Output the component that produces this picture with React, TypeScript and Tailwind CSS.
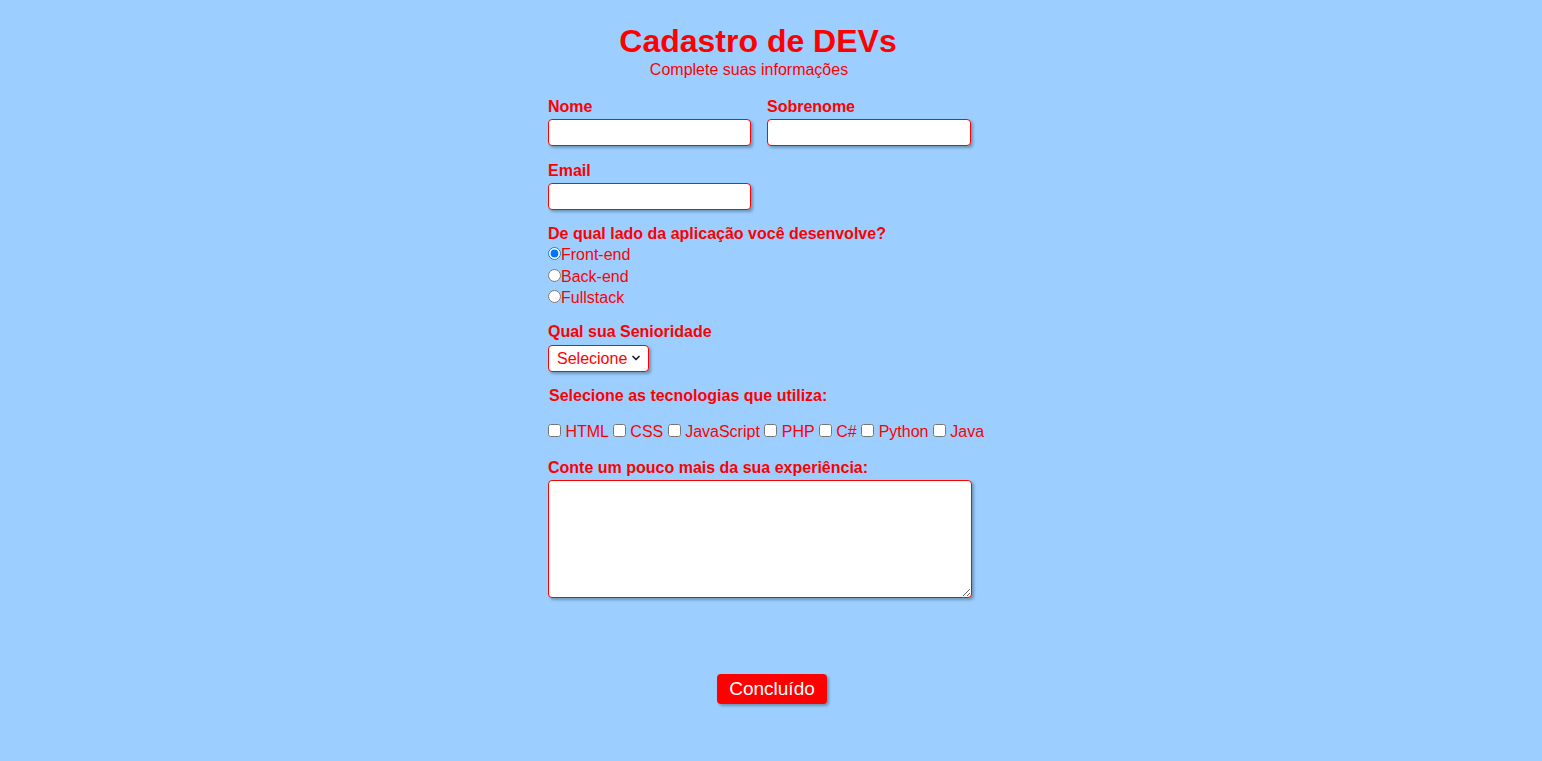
import { ChevronDown } from "lucide-react";

const fieldCls =
  "block h-[27px] rounded-[4px] border border-[#ff0000] bg-white shadow-[2px_2px_3px_rgba(0,0,0,0.28)] outline-none";
const labelCls = "block font-bold text-[#ff0000]";

const lados = ["Front-end", "Back-end", "Fullstack"];
const techs = ["HTML", "CSS", "JavaScript", "PHP", "C#", "Python", "Java"];

export default function App() {
  return (
    <div
      className="min-h-screen bg-[#9ccfff] text-[16px] leading-[normal] text-[#ff0000]"
      style={{ fontFamily: '"Liberation Sans", Arial, sans-serif' }}
    >
      <form className="mx-auto w-[446px] pt-[23px] pb-[58px]" onSubmit={(e) => e.preventDefault()}>
        {/* CABEÇALHO */}
        <h1 className="w-[420px] text-center text-[32px] font-bold">Cadastro de DEVs</h1>
        <p className="mt-[1px] w-[402px] text-center">Complete suas informações</p>

        {/* NOME / SOBRENOME */}
        <div className="mt-[19px] flex gap-[16px]">
          <div>
            <label className={labelCls}>Nome</label>
            <input type="text" className={`${fieldCls} mt-[3px] w-[203px]`} />
          </div>
          <div>
            <label className={labelCls}>Sobrenome</label>
            <input type="text" className={`${fieldCls} mt-[3px] w-[204px]`} />
          </div>
        </div>

        <div className="mt-[16px]">
          <label className={labelCls}>Email</label>
          <input type="email" className={`${fieldCls} mt-[3px] w-[203px]`} />
        </div>

        {/* LADO DA APLICAÇÃO */}
        <p className={`${labelCls} mt-[15px]`}>De qual lado da aplicação você desenvolve?</p>
        <div className="mt-[1px]">
          {lados.map((l, i) => (
            <div key={l} className="h-[21.5px] leading-[21.5px]">
              <input type="radio" name="lado" defaultChecked={i === 0} className="m-0" />
              <span>{l}</span>
            </div>
          ))}
        </div>

        {/* SENIORIDADE */}
        <p className={`${labelCls} mt-[14px]`}>Qual sua Senioridade</p>
        <div className={`${fieldCls} mt-[4px] flex w-[101px] items-center pr-[6px]`}>
          <select className="h-full min-w-0 flex-1 appearance-none bg-transparent pl-[8px] text-[#ff0000] outline-none">
            <option>Selecione</option>
            <option>Júnior</option>
            <option>Pleno</option>
            <option>Sênior</option>
          </select>
          <ChevronDown size={12} strokeWidth={3.5} className="text-[#222]" />
        </div>

        {/* TECNOLOGIAS */}
        <p className={`${labelCls} mt-[15px] pl-px`}>Selecione as tecnologias que utiliza:</p>
        <div className="mt-[18px] whitespace-nowrap">
          {techs.map((t) => (
            <span key={t}>
              <input type="checkbox" className="m-0" /> {t}{" "}
            </span>
          ))}
        </div>

        {/* EXPERIÊNCIA */}
        <label className={`${labelCls} mt-[18px]`}>Conte um pouco mais da sua experiência:</label>
        <textarea className={`${fieldCls} mt-[3px] h-[118px] w-[424px]`} />

        <div className="mt-[76px] flex justify-center pl-[2px]">
          <button
            type="submit"
            className="h-[30px] rounded-[4px] bg-[#ff0000] px-[12px] text-[19px] text-white shadow-[2px_2px_3px_rgba(0,0,0,0.3)]"
          >
            Concluído
          </button>
        </div>
      </form>
    </div>
  );
}
